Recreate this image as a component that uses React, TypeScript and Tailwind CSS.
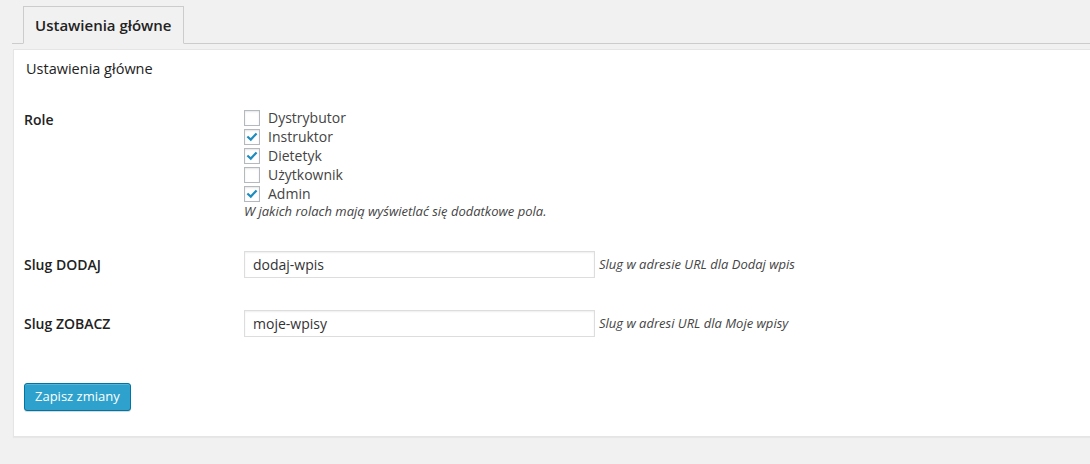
import React from 'react';

const roles = [
  { name: 'Dystrybutor', checked: false },
  { name: 'Instruktor', checked: true },
  { name: 'Dietetyk', checked: true },
  { name: 'Użytkownik', checked: false },
  { name: 'Admin', checked: true },
];

const Check = ({ checked }: { checked: boolean }) => (
  <span className="w-4 h-4 shrink-0 bg-white border border-[#b4b9be] shadow-[inset_0_1px_2px_rgba(0,0,0,0.1)] flex items-center justify-center">
    {checked && (
      <svg width="12" height="12" viewBox="0 0 12 12">
        <path d="M2.2 6.2 L4.8 8.6 L9.8 3.2" fill="none" stroke="#1e8cbe" strokeWidth="2.2" strokeLinecap="square" />
      </svg>
    )}
  </span>
);

export default function App() {
  return (
    <div
      className="h-[464px] w-[1090px] overflow-hidden bg-[#f1f1f1] pl-[12px] text-[#444]"
      style={{ fontFamily: '"Open Sans", "Noto Sans", sans-serif' }}
    >
      {/* tabs */}
      <div className="pt-[6px] border-b border-[#ccc] flex">
        <div className="ml-[11px] -mb-px h-[38px] px-[11px] border border-[#ccc] border-b-[#f1f1f1] bg-[#f1f1f1] flex items-center text-[15px] font-semibold text-[#222]">
          Ustawienia główne
        </div>
      </div>

      {/* settings box */}
      <div className="mt-[5px] ml-px -mr-4 bg-white border border-[#e5e5e5] shadow-[0_1px_1px_rgba(0,0,0,0.04)] pl-[10px] pb-[25px]">
        <div className="h-[43px] pt-[9px] pl-[2px] text-[14.5px] leading-[20px] text-[#222]">Ustawienia główne</div>

        <div className="grid grid-cols-[220px_1fr] text-[14px]">
          {/* Role */}
          <div className="pt-[18px] leading-[18px] font-semibold text-[#222]">Role</div>
          <div className="pt-[15px] pb-[16px]">
            {roles.map(r => (
              <label key={r.name} className="flex items-center gap-2 h-[19px] leading-[19px] text-[#444]">
                <Check checked={r.checked} />
                {r.name}
              </label>
            ))}
            <p className="text-[13px] italic leading-[16px] text-[#444]">W jakich rolach mają wyświetlać się dodatkowe pola.</p>
          </div>

          {/* Slug DODAJ */}
          <div className="flex items-center font-semibold text-[#222]">Slug DODAJ</div>
          <div className="py-[16px] flex items-center gap-1">
            <input
              readOnly
              value="dodaj-wpis"
              className="w-[351px] h-[27px] px-[8px] border border-[#ddd] shadow-[inset_0_1px_2px_rgba(0,0,0,0.07)] text-[14px] text-[#333] outline-none"
            />
            <span className="text-[13px] italic text-[#444]">Slug w adresie URL dla Dodaj wpis</span>
          </div>

          {/* Slug ZOBACZ */}
          <div className="flex items-center font-semibold text-[#222]">Slug ZOBACZ</div>
          <div className="py-[16px] flex items-center gap-1">
            <input
              readOnly
              value="moje-wpisy"
              className="w-[351px] h-[27px] px-[8px] border border-[#ddd] shadow-[inset_0_1px_2px_rgba(0,0,0,0.07)] text-[14px] text-[#333] outline-none"
            />
            <span className="text-[13px] italic text-[#444]">Slug w adresi URL dla Moje wpisy</span>
          </div>
        </div>

        <div className="pt-[30px]">
          <button className="h-[28px] px-[10px] rounded-[3px] bg-[#2ea2cc] border border-[#0074a2] shadow-[inset_0_1px_0_rgba(120,200,230,0.5),0_1px_0_rgba(0,0,0,0.15)] text-white text-[13px]">
            Zapisz zmiany
          </button>
        </div>
      </div>
    </div>
  );
}
